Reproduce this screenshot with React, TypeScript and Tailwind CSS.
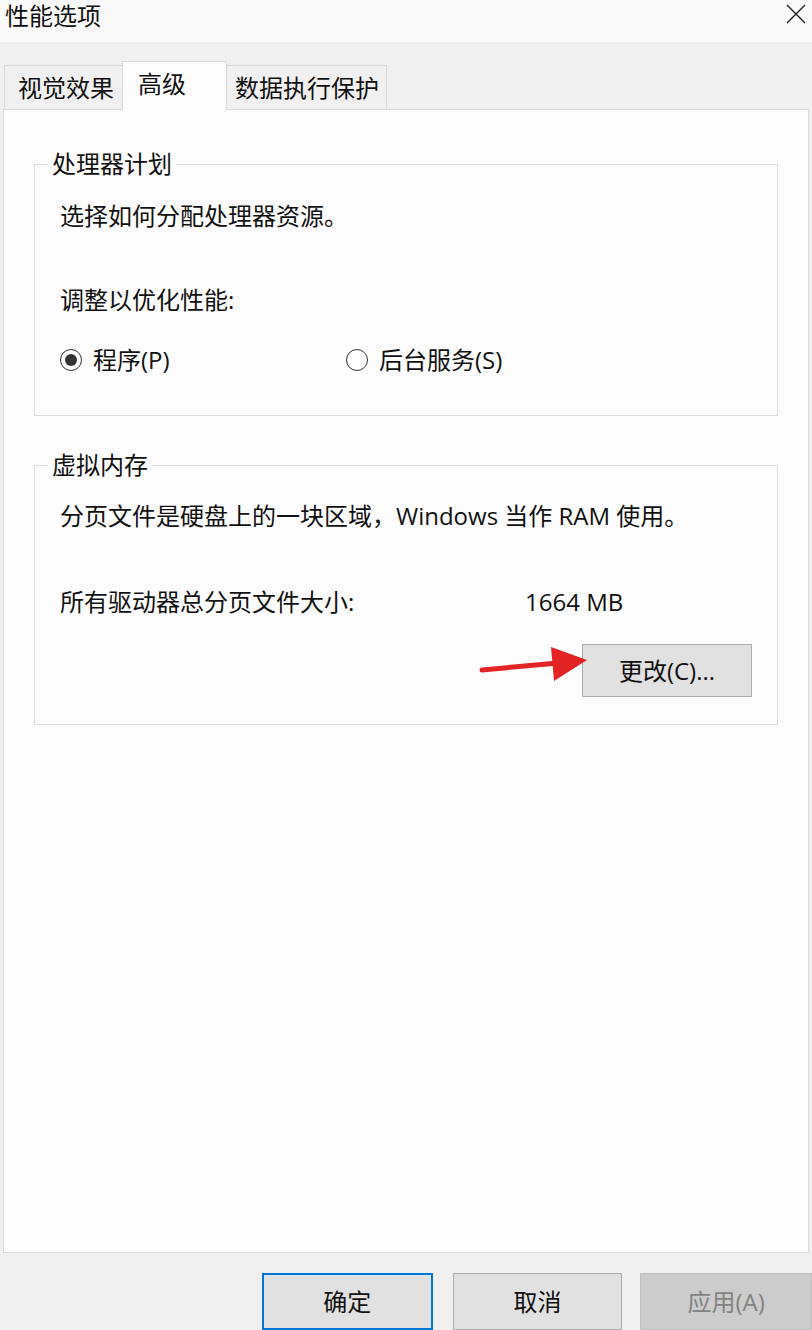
const font = {
  fontFamily: '"Open Sans", "Noto Sans CJK SC", sans-serif',
};

function Radio({ checked, label }: { checked?: boolean; label: string }) {
  return (
    <div className="flex items-center gap-[11px]">
      <span className="w-[22px] h-[22px] rounded-full border-[1.5px] border-[#333] bg-white flex items-center justify-center">
        {checked && <span className="w-[12px] h-[12px] rounded-full bg-[#333]" />}
      </span>
      <span>{label}</span>
    </div>
  );
}

function Group({ title, children }: { title: string; children: React.ReactNode }) {
  return (
    <fieldset className="border border-[#dcdcdc] px-0">
      <legend className="ml-[13px] px-[4px] leading-[32px]">{title}</legend>
      <div className="px-[25px]">{children}</div>
    </fieldset>
  );
}

export default function App() {
  return (
    <div
      style={font}
      className="relative w-[812px] h-[1330px] overflow-hidden bg-[#f0f0f0] text-[24px] leading-[32px] text-[#111]"
    >
      {/* title bar */}
      <div className="h-[43px] bg-[#fafafa] flex items-start justify-between pl-[5px] pr-[5px] pt-[1px] border-b border-[#ececec]">
        <span className="leading-[30px]">性能选项</span>
        <svg width="22" height="22" viewBox="0 0 22 22" className="mt-[2px]">
          <path d="M2 2 L20 20 M20 2 L2 20" stroke="#222" strokeWidth="1.4" fill="none" />
        </svg>
      </div>

      {/* tabs */}
      <div className="flex items-end pl-[4px] mt-[18px]">
        <div className="w-[119px] h-[44px] border border-b-0 border-[#d9d9d9] bg-[#f0f0f0] pl-[13px] pt-[6px]">
          视觉效果
        </div>
        <div className="relative z-10 -ml-px -mb-px w-[105px] h-[49px] border border-b-0 border-[#d9d9d9] bg-[#fdfdfd] pl-[15px] pt-[6px]">
          高级
        </div>
        <div className="-ml-px w-[161px] h-[44px] border border-b-0 border-[#d9d9d9] bg-[#f0f0f0] pl-[8px] pt-[6px]">
          数据执行保护
        </div>
      </div>

      {/* panel */}
      <div className="mx-[3px] h-[1144px] border border-[#d9d9d9] bg-[#fdfdfd] px-[30px] pt-[38px]">
        <Group title="处理器计划">
          <p className="mt-[20px]">选择如何分配处理器资源。</p>
          <p className="mt-[52px]">调整以优化性能:</p>
          <div className="mt-[28px] flex pb-[39px]">
            <div className="w-[286px]">
              <Radio checked label="程序(P)" />
            </div>
            <Radio label="后台服务(S)" />
          </div>
        </Group>

        <div className="mt-[33px]">
          <Group title="虚拟内存">
            <p className="mt-[19px]">分页文件是硬盘上的一块区域，Windows 当作 RAM 使用。</p>
            <div className="mt-[54px] flex">
              <span className="w-[465px]">所有驱动器总分页文件大小:</span>
              <span>1664 MB</span>
            </div>
            <div className="mt-[26px] pb-[27px] flex justify-end">
              <button className="w-[170px] h-[53px] border border-[#adadad] bg-[#e1e1e1]">
                更改(C)...
              </button>
            </div>
          </Group>
        </div>
      </div>

      {/* bottom buttons */}
      <div className="flex pt-[20px] pl-[262px]">
        <button className="w-[171px] h-[57px] border-2 border-[#0078d7] bg-[#e1e1e1]">确定</button>
        <button className="ml-[20px] w-[170px] h-[57px] border border-[#adadad] bg-[#e1e1e1]">取消</button>
        <button className="ml-[18px] w-[172px] h-[57px] border border-[#bfbfbf] bg-[#cccccc] text-[#838383]">
          应用(A)
        </button>
      </div>

      {/* red annotation arrow */}
      <svg
        className="absolute left-[478px] top-[642px]"
        width="114"
        height="46"
        viewBox="0 0 114 46"
      >
        <line x1="4" y1="28" x2="80" y2="21" stroke="#e32424" strokeWidth="5" strokeLinecap="round" />
        <polygon points="73,5 109,18 76,39" fill="#e32424" />
      </svg>
    </div>
  );
}
